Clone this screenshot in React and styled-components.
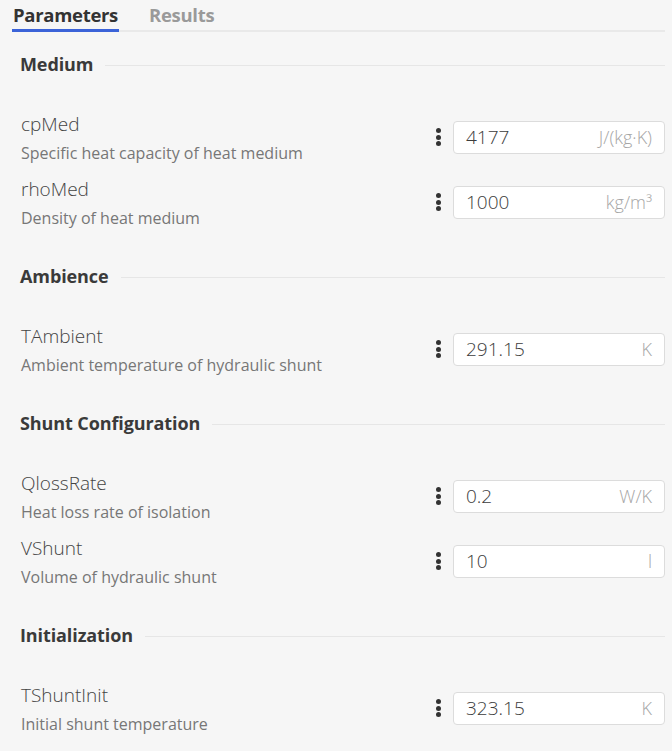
import React from "react";
import styled, { createGlobalStyle } from "styled-components";

const sections = [
  {
    title: "Medium",
    params: [
      { name: "cpMed", desc: "Specific heat capacity of heat medium", value: "4177", unit: "J/(kg·K)" },
      { name: "rhoMed", desc: "Density of heat medium", value: "1000", unit: "kg/m³" },
    ],
  },
  {
    title: "Ambience",
    params: [
      { name: "TAmbient", desc: "Ambient temperature of hydraulic shunt", value: "291.15", unit: "K" },
    ],
  },
  {
    title: "Shunt Configuration",
    params: [
      { name: "QlossRate", desc: "Heat loss rate of isolation", value: "0.2", unit: "W/K" },
      { name: "VShunt", desc: "Volume of hydraulic shunt", value: "10", unit: "l" },
    ],
  },
  {
    title: "Initialization",
    params: [
      { name: "TShuntInit", desc: "Initial shunt temperature", value: "323.15", unit: "K" },
    ],
  },
];

const App = () => {
  return (
    <Page>
      <GlobalStyle />
      <TabBar>
        <Tab active>Parameters</Tab>
        <Tab>Results</Tab>
      </TabBar>
      <Content>
        {sections.map((s) => (
          <Section key={s.title}>
            <SectionHeader>
              <SectionTitle>{s.title}</SectionTitle>
              <Rule />
            </SectionHeader>
            <RowList>
              {s.params.map((p) => (
                <Row key={p.name}>
                  <Info>
                    <Name>{p.name}</Name>
                    <Desc>{p.desc}</Desc>
                  </Info>
                  <Controls>
                    <Kebab>
                      <span />
                      <span />
                      <span />
                    </Kebab>
                    <Field>
                      <Value>{p.value}</Value>
                      <Unit>{p.unit}</Unit>
                    </Field>
                  </Controls>
                </Row>
              ))}
            </RowList>
          </Section>
        ))}
      </Content>
    </Page>
  );
};

export default App;

const GlobalStyle = createGlobalStyle`
  html, body {
    margin: 0;
    padding: 0;
    background: #f6f6f6;
  }
  body {
    font-family: "Open Sans", "Noto Sans", sans-serif;
    color: #444;
  }
`;

const Page = styled.div`
  width: 672px;
  min-height: 751px;
  background: #f6f6f6;
  padding: 0 7px 0 12px;
  box-sizing: border-box;
`;

const TabBar = styled.div`
  display: flex;
  gap: 29px;
  height: 32px;
  border-bottom: 2px solid #e9e9e9;
  box-sizing: border-box;
`;

const Tab = styled.div`
  font-size: 18.5px;
  font-weight: 700;
  color: ${(p) => (p.active ? "#333" : "#9a9a9a")};
  line-height: 30px;
  padding: 0 1px;
  border-bottom: 3px solid ${(p) => (p.active ? "#3b63d8" : "transparent")};
  height: 32px;
  box-sizing: border-box;
  letter-spacing: -0.3px;
`;

const Content = styled.div`
  padding: 20px 0 0 8px;
  display: flex;
  flex-direction: column;
  gap: 35px;
`;

const Section = styled.div`
  display: flex;
  flex-direction: column;
  gap: 34px;
`;

const SectionHeader = styled.div`
  display: flex;
  align-items: center;
  gap: 12px;
  height: 24px;
`;

const SectionTitle = styled.div`
  font-size: 18px;
  font-weight: 700;
  color: #3a3a3a;
  white-space: nowrap;
  letter-spacing: -0.1px;
`;

const Rule = styled.div`
  flex: 1;
  height: 1px;
  background: #e6e6e6;
  margin-top: 3px;
`;

const RowList = styled.div`
  display: flex;
  flex-direction: column;
  gap: 11px;
`;

const Row = styled.div`
  display: flex;
  align-items: center;
  justify-content: space-between;
`;

const Info = styled.div`
  display: flex;
  flex-direction: column;
  gap: 4px;
  padding-left: 1px;
`;

const Name = styled.div`
  font-size: 19px;
  font-weight: 300;
  line-height: 28px;
  color: #444;
`;

const Desc = styled.div`
  font-size: 16px;
  font-weight: 400;
  line-height: 22px;
  color: #777;
`;

const Controls = styled.div`
  display: flex;
  align-items: center;
  gap: 12px;
`;

const Kebab = styled.div`
  display: flex;
  flex-direction: column;
  gap: 1.5px;
  span {
    width: 5px;
    height: 5px;
    border-radius: 50%;
    background: #333;
  }
`;

const Field = styled.div`
  width: 212px;
  height: 33px;
  box-sizing: border-box;
  background: #fff;
  border: 1px solid #dcdcdc;
  border-radius: 4px;
  display: flex;
  align-items: center;
  justify-content: space-between;
  padding: 0 12px 0 12px;
`;

const Value = styled.span`
  font-size: 19px;
  font-weight: 300;
  color: #3c3c3c;
`;

const Unit = styled.span`
  font-size: 18px;
  font-weight: 300;
  color: #a6a6a6;
`;
